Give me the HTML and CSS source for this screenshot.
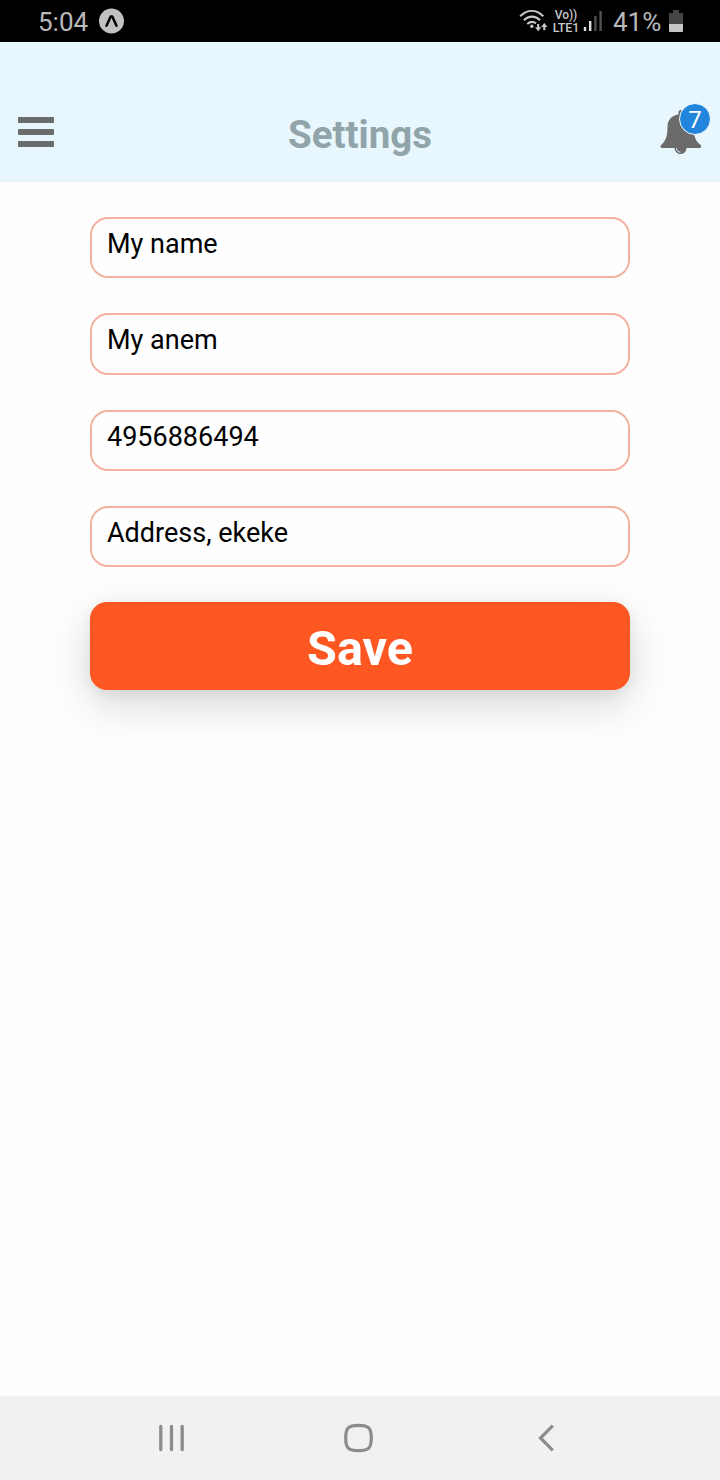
FILE: index.html
```html
<!DOCTYPE html>
<html lang="en">
<head>
<meta charset="utf-8">
<title>Settings</title>
<link rel="stylesheet" href="styles.css">
</head>
<body>
<div class="screen">
  <div class="status">
    <span class="time">5:04</span>
    <svg class="app-badge" width="26" height="26" viewBox="0 0 26 26"><circle cx="13.500" cy="13" r="12.500" fill="#c2c2c2"/><path d="M8.500 17.800 12.700 8.600h1.600l4.200 9.200" fill="none" stroke="#000" stroke-width="2.500" stroke-linecap="round" stroke-linejoin="round"/></svg>
    <svg class="wifi" width="30" height="24" viewBox="0 0 30 24" fill="none" stroke="#c6c6c6" stroke-width="2.1">
      <path d="M1.2 7.2C8.5.3 17 .3 24.3 7.2M4.8 11.2c5-4.8 11.4-4.8 16.2 0M8.2 15c3.200-2.600 6.200-2.600 8.800-.600"/>
      <circle cx="12.800" cy="17.200" r="1.700" fill="#c6c6c6" stroke="none"/>
      <path d="M19.200 15v5M25.300 21.200v-5"/>
      <path d="M16 18.200h6.400l-3.200 4ZM22.100 18h6.400l-3.200-4Z" fill="#c6c6c6" stroke="none"/>
    </svg>
    <div class="lte"><span class="volte">Vo))</span><span>LTE1</span></div>
    <svg class="signal" width="20" height="22" viewBox="0 0 20 22"><path d="M.8 17h2.400v4H.8z" fill="#dedede"/><path d="M6 11h2.400v10H6z" fill="#dedede"/><path d="M11.200 6h2.400v15h-2.400zM16.400 1h2.400v20h-2.400z" fill="#505050"/></svg>
    <span class="percent">41%</span>
    <svg class="battery" width="14" height="22" viewBox="0 0 14 22"><path d="M4 0h6v3h4v11H0V3h4z" fill="#444"/><path d="M0 14h14v7a1 1 0 0 1-1 1H1a1 1 0 0 1-1-1z" fill="#c6c6c6"/></svg>
  </div>
  <header class="header">
    <div class="menu"><i></i><i></i><i></i></div>
    <h1 class="title">Settings</h1>
    <div class="bell">
      <svg width="42" height="46" viewBox="0 0 42 46"><path d="M18.500 5.500V3.200c0-3 4-3 4 0v2.300C29.500 6.600 33.500 11 33.500 17.500c0 11 3 15.300 7.300 18.700 1 1.500.2 2.800-1.500 2.800H2.500C.6 39-.2 37.600 1 36.200 5.200 32.600 7.500 28.500 7.500 17.500c0-6.500 4-10.900 11-12Z" fill="#6b6b6b"/><path d="M14.500 38.500h12c0 4-2.500 6.500-6 6.500s-6-2.500-6-6.500Z" fill="#6b6b6b"/><path d="M16.500 39.300c0 2.300 1.600 3.800 4 3.900" fill="none" stroke="#e9f6fd" stroke-width="1"/></svg>
      <span class="count">7</span>
    </div>
  </header>
  <main class="form">
    <div class="field">My name</div>
    <div class="field">My anem</div>
    <div class="field">4956886494</div>
    <div class="field">Address, ekeke</div>
    <div class="save">Save</div>
  </main>
  <nav class="navbar">
    <svg width="28" height="30" viewBox="0 0 28 30"><path d="M2.800 3.500v23M13.500 3.500v23M24.200 3.500v23" stroke="#8c8c8c" stroke-width="3.300" stroke-linecap="round"/></svg>
    <svg width="30" height="30" viewBox="0 0 30 30"><path d="M14.500 2.300C24.700 2.300 27.300 4.800 27.300 15S24.700 27.700 14.500 27.700 1.700 25.200 1.700 15 4.300 2.300 14.500 2.300Z" fill="none" stroke="#8c8c8c" stroke-width="3.200"/></svg>
    <svg width="18" height="30" viewBox="0 0 18 30"><path d="M15.800 2.700 3.500 15l12.300 12.300" fill="none" stroke="#8c8c8c" stroke-width="3.200"/></svg>
  </nav>
</div>
</body>
</html>
```
FILE: styles.css
```css
body { margin: 0; font-family: Roboto, sans-serif; background: #fefefe; }
.screen { width: 720px; height: 1480px; display: flex; flex-direction: column; overflow: hidden; }
.status { height: 42px; box-sizing: border-box; flex: none; background: #000; color: #b9b9b9; display: flex; align-items: center; padding: 0 37px 0 38px; font-size: 26px; line-height: 30px; }
.time { width: 51px; margin-right: 9px; padding-top: 2px; }
.wifi { margin-left: auto; margin-right: 3px; }
.lte { width: 28px; display: flex; flex-direction: column; align-items: center; font-size: 12.500px; line-height: 13px; font-weight: 500; letter-spacing: -0.100px; color: #c6c6c6; }
.volte { line-height: 12px; font-size: 12px; }
.signal { margin-left: 3px; margin-right: 10px; }
.percent { width: 50px; margin-right: 6px; padding-top: 2px; }
.header { height: 140px; box-sizing: border-box; flex: none; background: #e8f6fd; display: grid; grid-template-columns: 60px 1fr 60px; align-items: start; padding: 62px 0 0; border-bottom: 1px solid #e9f0f3; }
.menu { display: flex; flex-direction: column; gap: 6px; padding: 13px 0 0 18px; }
.menu i { width: 36px; height: 6px; border-radius: 1px; background: #6b6b6b; }
.title { margin: 8px 0 0; text-align: center; font-size: 38.500px; line-height: 46px; font-weight: 700; color: #90a4a9; }
.bell { position: relative; height: 52px; padding-top: 5px; }
.count { position: absolute; left: 19px; top: -1px; width: 30px; height: 30px; border: 1px solid #f8fcff; border-radius: 50%; background: #2185dc; color: #fff; font-size: 24px; line-height: 32px; text-align: center; }
.form { flex: 1; padding: 35px 90px 0; display: flex; flex-direction: column; gap: 35px; }
.field { height: 61.300px; box-sizing: border-box; border: 2px solid #f3b3a0; border-radius: 18px; padding: 9px 15px; font-size: 27px; line-height: 32px; color: #000; }
.save { height: 88px; border-radius: 17px; background: #ff5722; color: #fff; font-size: 48.500px; line-height: 93px; font-weight: 700; text-align: center; box-shadow: 0 15px 44px rgba(0,0,0,.15), 0 3px 14px rgba(0,0,0,.07); }
.navbar { height: 84px; flex: none; background: #f1f1f1; display: grid; grid-template-columns: 187px 187px 187px; justify-content: center; align-items: center; justify-items: center; padding-right: 3px; }
```
